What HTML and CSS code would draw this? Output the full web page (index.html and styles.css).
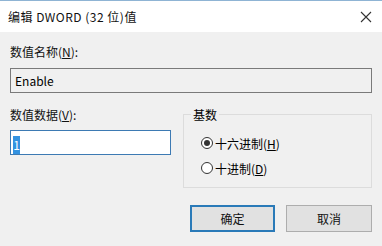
FILE: index.html
```
<!DOCTYPE html>
<html lang="zh-CN">
<head>
    <meta charset="UTF-8">
    <title>编辑 DWORD (32 位)值</title>
    <link rel="stylesheet" href="styles.css">
</head>
<body>
    <div id="dialog">
        <div class="titlebar">
            <span class="title">编辑 DWORD (32 位)值</span>
            <svg class="close" width="12" height="12" viewBox="0 0 12 12">
                <path d="M1 1L11 11M11 1L1 11" stroke="#333" stroke-width="1.1" fill="none"/>
            </svg>
        </div>

        <div class="content">
            <p class="label label-name">数值名称(<u>N</u>):</p>
            <div class="field field-name">Enable</div>

            <div class="row">
                <div class="col-data">
                    <p class="label">数值数据(<u>V</u>):</p>
                    <div class="field field-data"><span class="sel">1</span></div>
                </div>
                <fieldset class="base">
                    <legend>基数</legend>
                    <div class="radio"><span class="dot checked"></span>十六进制(<u>H</u>)</div>
                    <div class="radio"><span class="dot"></span>十进制(<u>D</u>)</div>
                </fieldset>
            </div>

            <div class="buttons">
                <button class="btn btn-ok">确定</button>
                <button class="btn">取消</button>
            </div>
        </div>
    </div>
</body>
</html>
```

FILE: styles.css
```
*{margin: 0;padding: 0;box-sizing: border-box;}

body{
    width: 382px;
    height: 246px;
    overflow: hidden;
    background-color: #f0f0f0;
    font-family: "Noto Sans CJK SC", "Liberation Sans", sans-serif;
    font-size: 12px;
    color: #000;
}

#dialog{
    height: 246px;
    border-top: 1px solid #8fb4d4;
}

.titlebar{
    height: 31px;
    background-color: #fff;
    display: flex;
    align-items: center;
    justify-content: space-between;
    padding: 0 10px 0 8px;
}

.title{
    font-size: 12px;
    letter-spacing: 0.5px;
    color: #111;
}

.content{
    padding: 0 10px;
}

.label{
    height: 16px;
    line-height: 16px;
    color: #111;
}

.label-name{
    margin-top: 12px;
}

.field{
    height: 25px;
    line-height: 23px;
    border: 1px solid #7a7a7a;
    padding: 0 4px;
}

.field-name{
    margin-top: 8px;
    background-color: #f0f0f0;
}

.row{
    display: grid;
    grid-template-columns: 161px 189px;
    column-gap: 12px;
    margin-top: 14px;
}

.col-data .field{
    margin-top: 7px;
}

.field-data{
    background-color: #fff;
    border-color: #3d7ab3;
    padding: 0 2px;
}

.sel{
    display: inline-block;
    background-color: #3392e0;
    color: #fff;
    width: 7px;
    height: 18px;
    line-height: 18px;
    text-align: center;
    vertical-align: middle;
}

.base{
    height: 81px;
    border: 1px solid #dcdcdc;
    padding: 0 0 0 7px;
}

.base legend{
    padding: 0 2px;
    line-height: 15px;
}

.radio{
    display: flex;
    align-items: center;
    height: 16px;
    padding-left: 10px;
    margin-top: 13px;
}

.radio + .radio{
    margin-top: 9px;
}

.dot{
    width: 12px;
    height: 12px;
    border: 1px solid #333;
    border-radius: 50%;
    background-color: #fff;
    margin-right: 2px;
    display: flex;
    align-items: center;
    justify-content: center;
}

.dot.checked::after{
    content: "";
    width: 6px;
    height: 6px;
    border-radius: 50%;
    background-color: #333;
}

.buttons{
    display: flex;
    justify-content: flex-end;
    gap: 11px;
    margin-top: 17px;
}

.btn{
    width: 86px;
    height: 27px;
    background-color: #e1e1e1;
    border: 1px solid #adadad;
    font-family: inherit;
    font-size: 12px;
    color: #111;
}

.btn-ok{
    width: 85px;
    border: 2px solid #2a7ab8;
}
```
